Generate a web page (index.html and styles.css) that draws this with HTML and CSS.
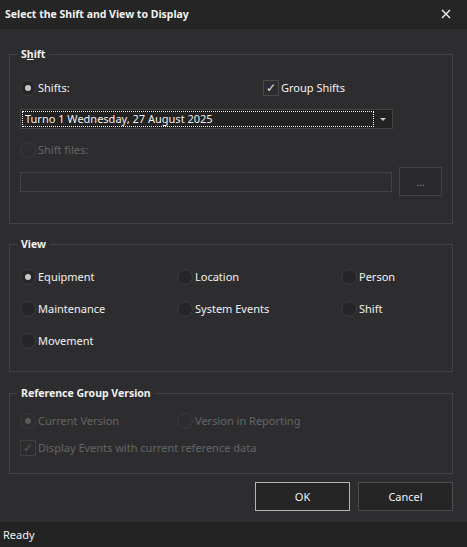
FILE: index.html
```html
<!DOCTYPE html>
<html lang="en">
<head>
    <meta charset="UTF-8">
    <title>Select the Shift and View to Display</title>
    <link rel="stylesheet" href="styles.css">
</head>
<body>
    <div class="dialog">
        <div class="titlebar">
            <span class="title">Select the Shift and View to Display</span>
            <svg class="close" width="10" height="10" viewBox="0 0 10 10">
                <path d="M1 1L9 9M9 1L1 9" stroke="#f1f1f1" stroke-width="1.4"/>
            </svg>
        </div>

        <div class="content">
            <fieldset class="group shift-group">
                <legend>S<u>h</u>ift</legend>
                <div class="row first">
                    <label class="option shifts-opt"><span class="radio checked"></span>Shifts:</label>
                    <label class="option"><span class="check checked">&#10003;</span>Group Shifts</label>
                </div>
                <div class="combo">
                    <span class="combo-text">Turno 1 Wednesday, 27 August 2025</span>
                    <span class="combo-arrow"></span>
                </div>
                <div class="row files">
                    <label class="option disabled"><span class="radio"></span>Shift files:</label>
                </div>
                <div class="file-row">
                    <div class="textbox"></div>
                    <button class="browse">...</button>
                </div>
            </fieldset>

            <fieldset class="group view-group">
                <legend>View</legend>
                <div class="view-grid">
                    <label class="option"><span class="radio checked"></span>Equipment</label>
                    <label class="option"><span class="radio"></span>Location</label>
                    <label class="option"><span class="radio"></span>Person</label>
                    <label class="option"><span class="radio"></span>Maintenance</label>
                    <label class="option"><span class="radio"></span>System Events</label>
                    <label class="option"><span class="radio"></span>Shift</label>
                    <label class="option"><span class="radio"></span>Movement</label>
                </div>
            </fieldset>

            <fieldset class="group ref-group">
                <legend>Reference Group Version</legend>
                <div class="ref-row">
                    <label class="option disabled ref-first"><span class="radio checked"></span>Current Version</label>
                    <label class="option disabled"><span class="radio"></span>Version in Reporting</label>
                </div>
                <div class="ref-check">
                    <label class="option disabled"><span class="check checked">&#10003;</span>Display Events with current reference data</label>
                </div>
            </fieldset>

            <div class="actions">
                <button class="btn default">OK</button>
                <button class="btn">Cancel</button>
            </div>
        </div>

        <div class="statusbar">Ready</div>
    </div>
</body>
</html>
```

FILE: styles.css
```css
* {
    box-sizing: border-box;
}

body {
    margin: 0;
    background-color: #2d2d30;
    color: #f1f1f1;
    font-family: "Noto Sans", "Open Sans", sans-serif;
    font-size: 11px;
}

.dialog {
    width: 467px;
    height: 547px;
    display: flex;
    flex-direction: column;
}

.titlebar {
    height: 28px;
    flex-shrink: 0;
    background-color: #252526;
    display: flex;
    align-items: center;
    justify-content: space-between;
    padding: 0 16px 0 5px;
    box-shadow: 0 1px 0 #202022;
}

.title {
    font-weight: bold;
    font-size: 10.5px;
}

.content {
    flex: 1;
    padding: 18px 14px 0 9px;
}

.group {
    margin: 0;
    padding: 0 10px;
    border: 1px solid #434346;
    min-width: 0;
}

.group legend {
    margin-left: -3px;
    padding: 0 4px;
    line-height: 16px;
    font-weight: bold;
    font-size: 10.5px;
}

.shift-group {
    padding-bottom: 27px;
}

.view-group {
    margin-top: 12px;
    padding-bottom: 20px;
}

.ref-group {
    margin-top: 13px;
    padding-bottom: 17px;
}

.row {
    display: flex;
    align-items: center;
    height: 20px;
}

.row.first {
    margin-top: 16px;
}

.row.files {
    margin-top: 11px;
}

.shifts-opt {
    width: 243px;
}

.option {
    display: flex;
    align-items: center;
    gap: 2px;
    height: 16px;
    line-height: 16px;
    white-space: nowrap;
}

.option.disabled {
    color: #656565;
}

.radio {
    width: 16px;
    height: 16px;
    border-radius: 50%;
    border: 1px solid #3c3c3f;
    background-color: #262628;
    display: flex;
    align-items: center;
    justify-content: center;
    flex-shrink: 0;
}

.radio.checked::after {
    content: "";
    width: 6px;
    height: 6px;
    border-radius: 50%;
    background-color: #c8c8c8;
}

.disabled .radio {
    background-color: #2d2d30;
}

.disabled .radio.checked::after {
    background-color: #5a5a5a;
}

.check {
    width: 16px;
    height: 16px;
    border: 1px solid #4a4a4d;
    display: flex;
    align-items: center;
    justify-content: center;
    font-size: 12px;
    color: #e0e0e0;
    flex-shrink: 0;
}

.disabled .check {
    border-color: #3f3f42;
    color: #5a5a5a;
}

.combo {
    margin-top: 11px;
    width: 373px;
    height: 20px;
    border: 1px solid #434346;
    background-color: #222223;
    padding: 1px;
    display: flex;
    align-items: center;
}

.combo-text {
    flex: 1;
    height: 16px;
    line-height: 14px;
    padding-left: 2px;
    border: 1px dotted #ffffff;
}

.combo-arrow {
    width: 17px;
    display: flex;
    justify-content: center;
}

.combo-arrow::after {
    content: "";
    border-left: 3px solid transparent;
    border-right: 3px solid transparent;
    border-top: 3px solid #c8c8c8;
}

.file-row {
    margin-top: 7px;
    display: flex;
    align-items: center;
    height: 29px;
}

.textbox {
    width: 373px;
    height: 20px;
    border: 1px solid #434346;
}

.browse {
    margin-left: 7px;
    width: 43px;
    height: 29px;
    border: 1px solid #434346;
    background-color: #2a2a2c;
    color: #8a8a8a;
    font-family: inherit;
    font-size: 10px;
    padding: 0;
}

.view-grid {
    margin-top: 15px;
    display: grid;
    grid-template-columns: 157px 164px 1fr;
    grid-auto-rows: 20px;
    row-gap: 12px;
    align-items: center;
}

.ref-row {
    margin-top: 12px;
    display: flex;
}

.ref-first {
    width: 157px;
}

.ref-check {
    margin-top: 11px;
}

.actions {
    display: flex;
    justify-content: flex-end;
    gap: 8px;
    margin-top: 8px;
}

.btn {
    width: 95px;
    height: 29px;
    background-color: #252526;
    border: 1px solid #4e4e52;
    color: #f1f1f1;
    font-family: inherit;
    font-size: 11px;
}

.btn.default {
    border-color: #b4b4b4;
}

.statusbar {
    height: 25px;
    flex-shrink: 0;
    line-height: 25px;
    padding-left: 3px;
    background-color: #232324;
}
```
